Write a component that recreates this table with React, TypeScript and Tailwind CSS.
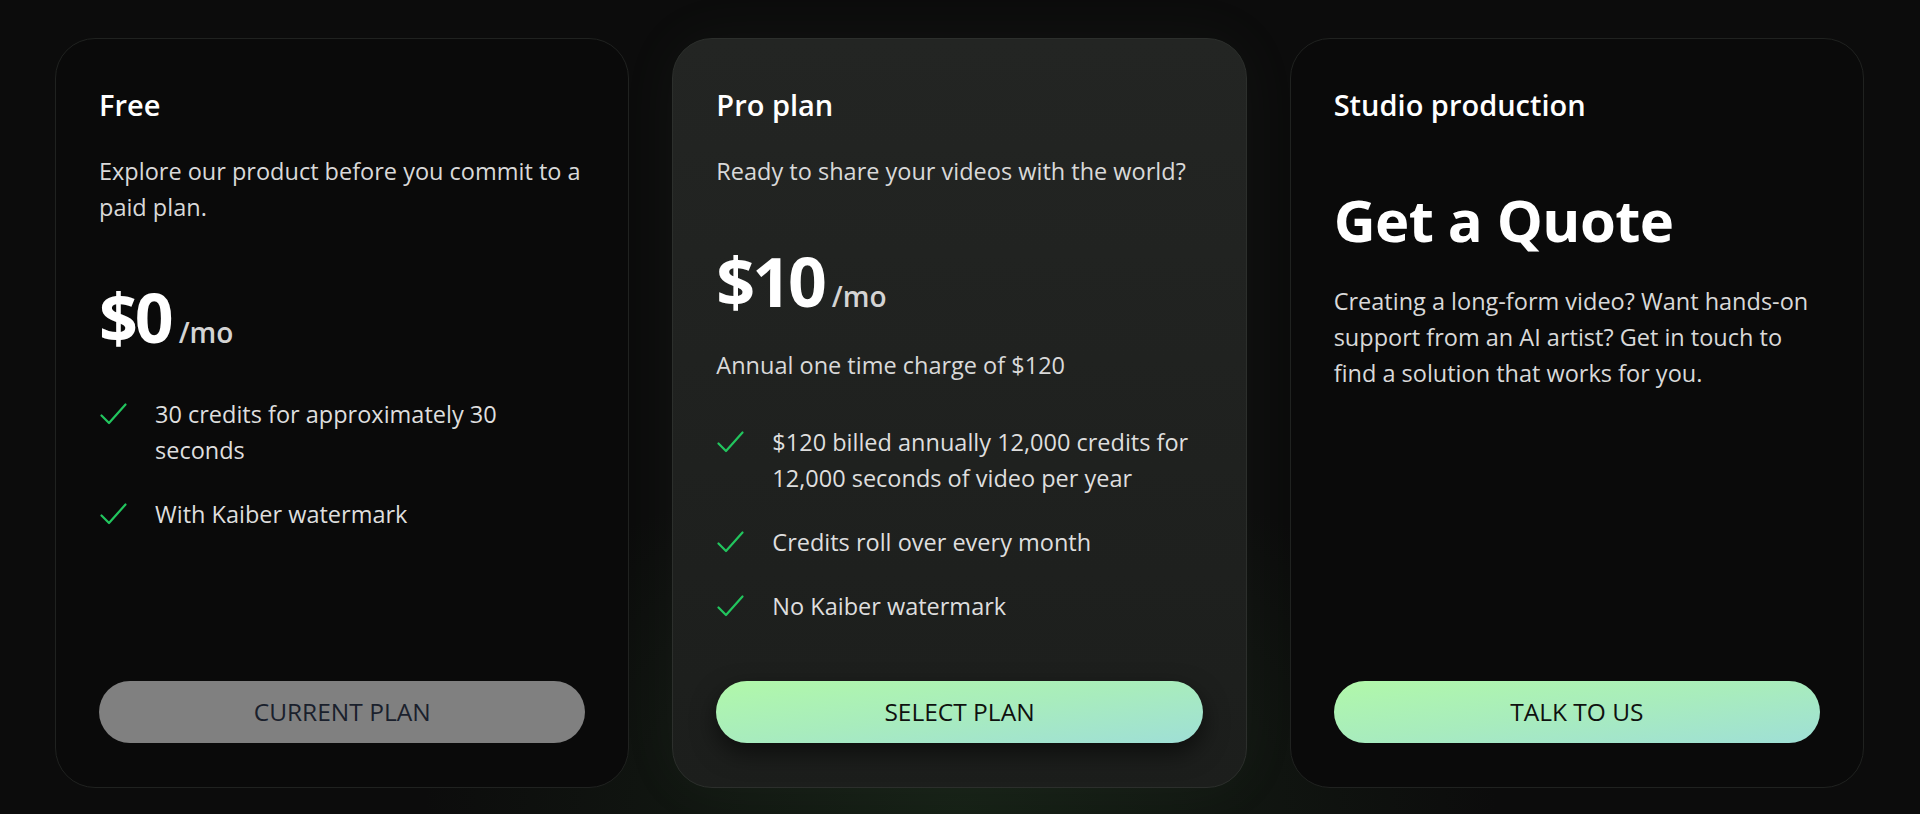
import React from 'react';

interface Plan {
  name: string;
  description: string;
  price?: string;
  note?: string;
  quote?: string;
  features: string[];
  cta: string;
  current?: boolean;
  highlighted?: boolean;
}

const plans: Plan[] = [
  {
    name: 'Free',
    description: 'Explore our product before you commit to a paid plan.',
    price: '$0',
    features: ['30 credits for approximately 30 seconds', 'With Kaiber watermark'],
    cta: 'Current plan',
    current: true,
  },
  {
    name: 'Pro plan',
    description: 'Ready to share your videos with the world?',
    price: '$10',
    note: 'Annual one time charge of $120',
    features: [
      '$120 billed annually 12,000 credits for 12,000 seconds of video per year',
      'Credits roll over every month',
      'No Kaiber watermark',
    ],
    cta: 'Select plan',
    highlighted: true,
  },
  {
    name: 'Studio production',
    description:
      'Creating a long-form video? Want hands-on support from an AI artist? Get in touch to find a solution that works for you.',
    quote: 'Get a Quote',
    features: [],
    cta: 'Talk to us',
  },
];

const Check = () => (
  <svg width="28" height="28" viewBox="0 0 28 28" fill="none" className="mt-[4px] shrink-0">
    <path d="M2.5 15.5 L10 23 L26.5 4.5" stroke="#22c55e" strokeWidth="2.2" strokeLinecap="round" strokeLinejoin="round" />
  </svg>
);

const PlanCard: React.FC<{ plan: Plan }> = ({ plan }) => {
  const cardBg = plan.highlighted
    ? 'bg-gradient-to-b from-[#232523] to-[#1c1e1c] border-[#2c2f2c] shadow-[0_0_60px_rgba(120,160,120,0.06)]'
    : 'bg-[#0a0a0a] border-[#202220]';

  return (
    <div className={`h-[750px] rounded-[40px] border ${cardBg} px-[43px] pt-[48px] pb-[44px] flex flex-col`}>
      <h3 className="text-[29px] leading-[36px] font-semibold text-white">{plan.name}</h3>

      {plan.quote ? (
        <>
          <p className="mt-[68px] text-[58px] leading-none font-bold tracking-[-0.01em] text-white">{plan.quote}</p>
          <p className="mt-[34px] text-[23.5px] leading-[36px] text-[#d9d9d9]">{plan.description}</p>
        </>
      ) : (
        <>
          <p className="mt-[30px] text-[23.5px] leading-[36px] text-[#d9d9d9]">{plan.description}</p>
          <div className="mt-[58px] flex items-baseline">
            <span className="text-[68px] leading-none font-bold tracking-[-0.045em] text-white">{plan.price}</span>
            <span className="ml-[8px] text-[28px] leading-none font-semibold text-[#d4d4d4]">/mo</span>
          </div>
          {plan.note && (
            <p className="mt-[32px] text-[23.5px] leading-[36px] text-[#d9d9d9]">{plan.note}</p>
          )}
          <ul className={`${plan.note ? 'mt-[41px]' : 'mt-[45px]'} space-y-[28px]`}>
            {plan.features.map(f => (
              <li key={f} className="flex items-start">
                <Check />
                <span className="ml-[28px] max-w-[424px] text-[23.5px] leading-[36px] text-[#dedede]">{f}</span>
              </li>
            ))}
          </ul>
        </>
      )}

      <button
        className={`mt-auto h-[62px] w-full rounded-full text-[24.5px] uppercase ${
          plan.current
            ? 'bg-[#808080] text-[#1a202c]'
            : 'bg-gradient-to-br from-[#b1f8a9] via-[#a8ecbd] to-[#9fdfd6] text-[#0f110f]'
        } ${plan.highlighted ? 'shadow-[0_10px_24px_rgba(0,0,0,0.55)]' : ''}`}
      >
        {plan.cta}
      </button>
    </div>
  );
};

export default function App() {
  return (
    <div
      className="min-h-[814px] w-full bg-[#0c0c0c] bg-[radial-gradient(ellipse_28%_45%_at_50%_100%,rgba(40,70,40,0.35),transparent)] pl-[55px] pr-[56px] pt-[38px] pb-[26px]"
      style={{ fontFamily: '"Segoe UI", "Open Sans", "Noto Sans", sans-serif' }}
    >
      <div className="grid grid-cols-3 gap-[43px]">
        {plans.map(p => (
          <PlanCard key={p.name} plan={p} />
        ))}
      </div>
    </div>
  );
}
